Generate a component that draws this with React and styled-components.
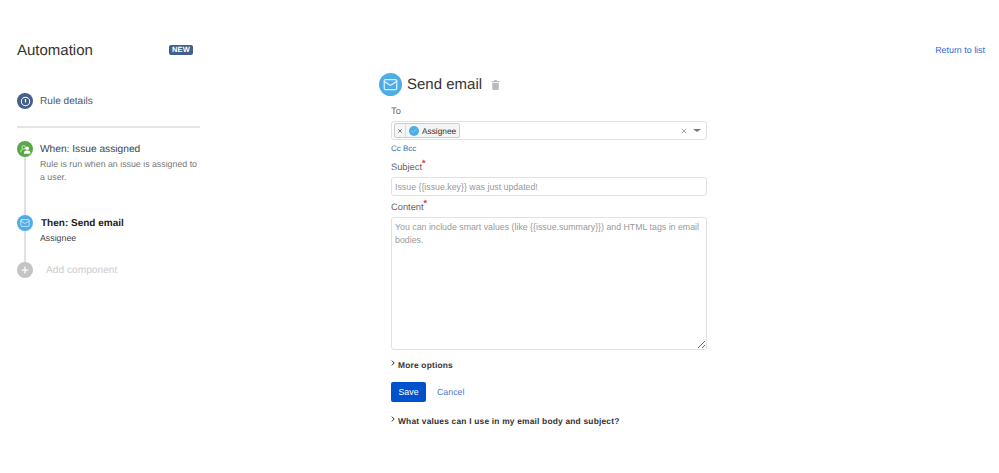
import styled, { createGlobalStyle } from 'styled-components';
import { X, Mail, Plus, Check } from 'lucide-react';

const GlobalStyle = createGlobalStyle`
  html, body {
    margin: 0;
    background: #fff;
    font-family: 'Liberation Sans', Arial, sans-serif;
    color: #333;
    text-rendering: geometricPrecision;
  }
`;

const Page = styled.div`
  width: 999px;
  height: 473px;
  box-sizing: border-box;
  padding: 41px 14px 0 17px;
  display: grid;
  grid-template-columns: 183px 1fr auto;
  overflow: hidden;
`;

const Sidebar = styled.aside`
  display: flex;
  flex-direction: column;
`;

const SideHeader = styled.div`
  height: 18px;
  display: flex;
  align-items: center;
  justify-content: space-between;
  padding-right: 7px;
`;

const Title = styled.h1`
  margin: 0;
  font-size: 15px;
  font-weight: 400;
  color: #333;
`;

const NewBadge = styled.span`
  background: #42608a;
  color: #fff;
  font-size: 7.5px;
  font-weight: 700;
  letter-spacing: 0.2px;
  line-height: 10px;
  padding: 0 3px;
  border-radius: 2px;
`;

const DetailsRow = styled.div`
  margin-top: 34px;
  padding-bottom: 17px;
  border-bottom: 2px solid #e4e5e8;
  display: flex;
  align-items: center;
  gap: 7px;
  font-size: 10.1px;
  color: #555;
`;

const DetailsLabel = styled.span`
  padding-top: 1px;
`;

const Steps = styled.div`
  margin-top: 13px;
  display: flex;
  flex-direction: column;
`;

const Step = styled.div`
  position: relative;
  display: flex;
  gap: 7px;
  min-height: ${p => p.$height}px;
`;

const Rail = styled.span`
  position: absolute;
  left: 7px;
  top: 14px;
  bottom: -2px;
  width: 2px;
  background: #dfe1e6;
`;

const Dot = styled.span`
  position: relative;
  z-index: 1;
  flex: none;
  width: 16px;
  height: 16px;
  border-radius: 50%;
  display: flex;
  align-items: center;
  justify-content: center;
  color: #fff;
  background: ${p => p.$color};
`;

const StepBody = styled.div`
  display: flex;
  flex-direction: column;
`;

const StepTitle = styled.div`
  margin-top: 1px;
  margin-left: ${p => (p.$bold ? 1 : 0)}px;
  font-size: ${p => (p.$bold ? 10 : 10.2)}px;
  line-height: 16px;
  font-weight: ${p => (p.$bold ? 700 : 400)};
  color: ${p => (p.$bold ? '#222' : '#444')};
`;

const StepText = styled.div`
  font-size: 8.8px;
  line-height: 13px;
  color: ${p => p.$color || '#777'};
  width: 160px;
`;

const AddLabel = styled.div`
  margin-left: 6px;
  padding-top: 1px;
  font-size: 10.2px;
  line-height: 16px;
  color: #ccc;
`;

const Main = styled.main`
  padding: 32px 0 0 179px;
  display: flex;
  flex-direction: column;
`;

const MainHeader = styled.div`
  height: 23px;
  display: flex;
  align-items: center;
  gap: 5px;
`;

const HeaderIcon = styled.span`
  width: 23px;
  height: 23px;
  border-radius: 50%;
  background: #4fade6;
  display: flex;
  align-items: center;
  justify-content: center;
  color: #d6eefb;
`;

const MainTitle = styled.h2`
  margin: 0;
  font-size: 15px;
  font-weight: 400;
  color: #333;
`;

const TrashButton = styled.span`
  margin-left: 4px;
  display: flex;
  color: #bbb;
`;

const Form = styled.form`
  width: 316px;
  margin-left: 12px;
  display: flex;
  flex-direction: column;
`;

const Label = styled.label`
  font-size: 9.3px;
  line-height: 12px;
  color: #666;
  margin-top: ${p => p.$top}px;
  margin-bottom: ${p => p.$bottom}px;
`;

const Required = styled.sup`
  color: #d04437;
  font-size: 9px;
  font-weight: 700;
  line-height: 0;
`;

const SelectBox = styled.div`
  height: 19px;
  box-sizing: border-box;
  border: 1px solid #dfe1e6;
  border-radius: 3px;
  display: flex;
  align-items: center;
  padding: 0 5px 0 2px;
`;

const Tag = styled.span`
  height: 13px;
  display: flex;
  align-items: center;
  border: 1px solid #ccc;
  border-radius: 2px;
  background: #f4f5f7;
  font-size: 8.3px;
  color: #333;
`;

const TagClose = styled.span`
  display: flex;
  width: 10px;
  justify-content: center;
  border-right: 1px solid #ddd;
  height: 100%;
  align-items: center;
  color: #555;
`;

const TagAvatar = styled.span`
  width: 10px;
  height: 10px;
  margin: 0 3px;
  border-radius: 50%;
  background: #4fade6;
  display: flex;
  align-items: center;
  justify-content: center;
  color: #c8e6f8;
`;

const TagText = styled.span`
  padding-right: 3px;
`;

const SelectControls = styled.span`
  margin-left: auto;
  display: flex;
  align-items: center;
  gap: 5px;
  color: #777;
`;

const Caret = styled.span`
  width: 0;
  height: 0;
  border-left: 4px solid transparent;
  border-right: 4px solid transparent;
  border-top: 3px solid #777;
`;

const CcLink = styled.a`
  margin-top: 3px;
  font-size: 8px;
  line-height: 11px;
  color: #3b73af;
`;

const TextInput = styled.input`
  height: 19px;
  box-sizing: border-box;
  border: 1px solid #dfe1e6;
  border-radius: 3px;
  padding: 0 3px;
  font: 8.8px 'Liberation Sans', Arial, sans-serif;
  outline: none;
  &::placeholder { color: #999; opacity: 1; }
`;

const TextArea = styled.textarea`
  height: 133px;
  box-sizing: border-box;
  border: 1px solid #dfe1e6;
  border-radius: 3px;
  padding: 3px;
  font: 8.8px/13px 'Liberation Sans', Arial, sans-serif;
  outline: none;
  &::placeholder { color: #999; opacity: 1; }
`;

const Disclosure = styled.div`
  margin-top: ${p => p.$top}px;
  display: flex;
  align-items: center;
  gap: 3px;
  font-size: 8.4px;
  line-height: 12px;
  font-weight: 700;
  letter-spacing: 0.2px;
  color: #333;
  svg { margin-top: -4px; }
`;

const Actions = styled.div`
  margin-top: 11px;
  display: flex;
  align-items: center;
  gap: 11px;
`;

const SaveButton = styled.button`
  width: 35px;
  height: 20px;
  padding: 0;
  border: none;
  border-radius: 2px;
  background: #0052cc;
  color: #fff;
  font: 8.8px 'Liberation Sans', Arial, sans-serif;
`;

const CancelLink = styled.a`
  font-size: 8.8px;
  color: #4a76d0;
`;

const ReturnLink = styled.a`
  font-size: 8.9px;
  line-height: 18px;
  color: #2f6ad9;
`;

const PeopleIcon = () => (
  <svg width="11" height="11" viewBox="0 0 12 12">
    <circle cx="4" cy="3.6" r="1.9" fill="none" stroke="#d4ecc9" strokeWidth="1" />
    <path d="M1 9V7.6c0-1 1-1.6 2-1.6" fill="none" stroke="#d4ecc9" strokeWidth="1" />
    <circle cx="7.8" cy="4.6" r="2" fill="#fff" />
    <path d="M4.4 10.5V9c0-1.3 1.4-2 3.4-2s3.4.7 3.4 2v1.500z" fill="#fff" />
  </svg>
);

const InfoIcon = () => (
  <svg width="11" height="11" viewBox="0 0 12 12" fill="none" stroke="#fff">
    <circle cx="6" cy="6" r="4.6" strokeWidth="1.1" />
    <path d="M6 3.4v3.6" strokeWidth="1.4" />
  </svg>
);

const TrashIcon = () => (
  <svg width="9" height="10" viewBox="0 0 10 11" fill="currentColor">
    <path d="M3.6 0h2.800v1H9.400v1.300H.6V1h3zM1.400 3h7.200v7a1 1 0 0 1-1 1H2.400a1 1 0 0 1-1-1z" />
  </svg>
);

const Chevron = () => (
  <svg width="4" height="6" viewBox="0 0 4 6" fill="none" stroke="#333" strokeWidth="1">
    <path d="M.8.6 3.200 3 .8 5.400" />
  </svg>
);

export default function App() {
  return (
    <Page>
      <GlobalStyle />
      <Sidebar>
        <SideHeader>
          <Title>Automation</Title>
          <NewBadge>NEW</NewBadge>
        </SideHeader>
        <DetailsRow>
          <Dot $color="#42608a"><InfoIcon /></Dot>
          <DetailsLabel>Rule details</DetailsLabel>
        </DetailsRow>
        <Steps>
          <Step $height={74}>
            <Rail />
            <Dot $color="#5aa845"><PeopleIcon /></Dot>
            <StepBody>
              <StepTitle>When: Issue assigned</StepTitle>
              <StepText>Rule is run when an issue is assigned to a user.</StepText>
            </StepBody>
          </Step>
          <Step $height={47}>
            <Rail />
            <Dot $color="#4fade6"><Mail size={10} color="#d6eefb" /></Dot>
            <StepBody>
              <StepTitle $bold>Then: Send email</StepTitle>
              <StepText $color="#444">Assignee</StepText>
            </StepBody>
          </Step>
          <Step $height={16}>
            <Dot $color="#c4c4c4"><Plus size={10} strokeWidth={3} /></Dot>
            <AddLabel>Add component</AddLabel>
          </Step>
        </Steps>
      </Sidebar>
      <Main>
        <MainHeader>
          <HeaderIcon><Mail size={15} /></HeaderIcon>
          <MainTitle>Send email</MainTitle>
          <TrashButton><TrashIcon /></TrashButton>
        </MainHeader>
        <Form>
          <Label $top={9} $bottom={4}>To</Label>
          <SelectBox>
            <Tag>
              <TagClose><X size={6} strokeWidth={3} /></TagClose>
              <TagAvatar><Check size={6} /></TagAvatar>
              <TagText>Assignee</TagText>
            </Tag>
            <SelectControls>
              <X size={8} strokeWidth={2} />
              <Caret />
            </SelectControls>
          </SelectBox>
          <CcLink>Cc Bcc</CcLink>
          <Label $top={7} $bottom={4}>Subject<Required>*</Required></Label>
          <TextInput placeholder="Issue {{issue.key}} was just updated!" />
          <Label $top={5} $bottom={4}>Content<Required>*</Required></Label>
          <TextArea placeholder="You can include smart values (like {{issue.summary}}) and HTML tags in email bodies." />
          <Disclosure $top={9}><Chevron />More options</Disclosure>
          <Actions>
            <SaveButton type="button">Save</SaveButton>
            <CancelLink>Cancel</CancelLink>
          </Actions>
          <Disclosure $top={13}><Chevron />What values can I use in my email body and subject?</Disclosure>
        </Form>
      </Main>
      <ReturnLink>Return to list</ReturnLink>
    </Page>
  );
}
